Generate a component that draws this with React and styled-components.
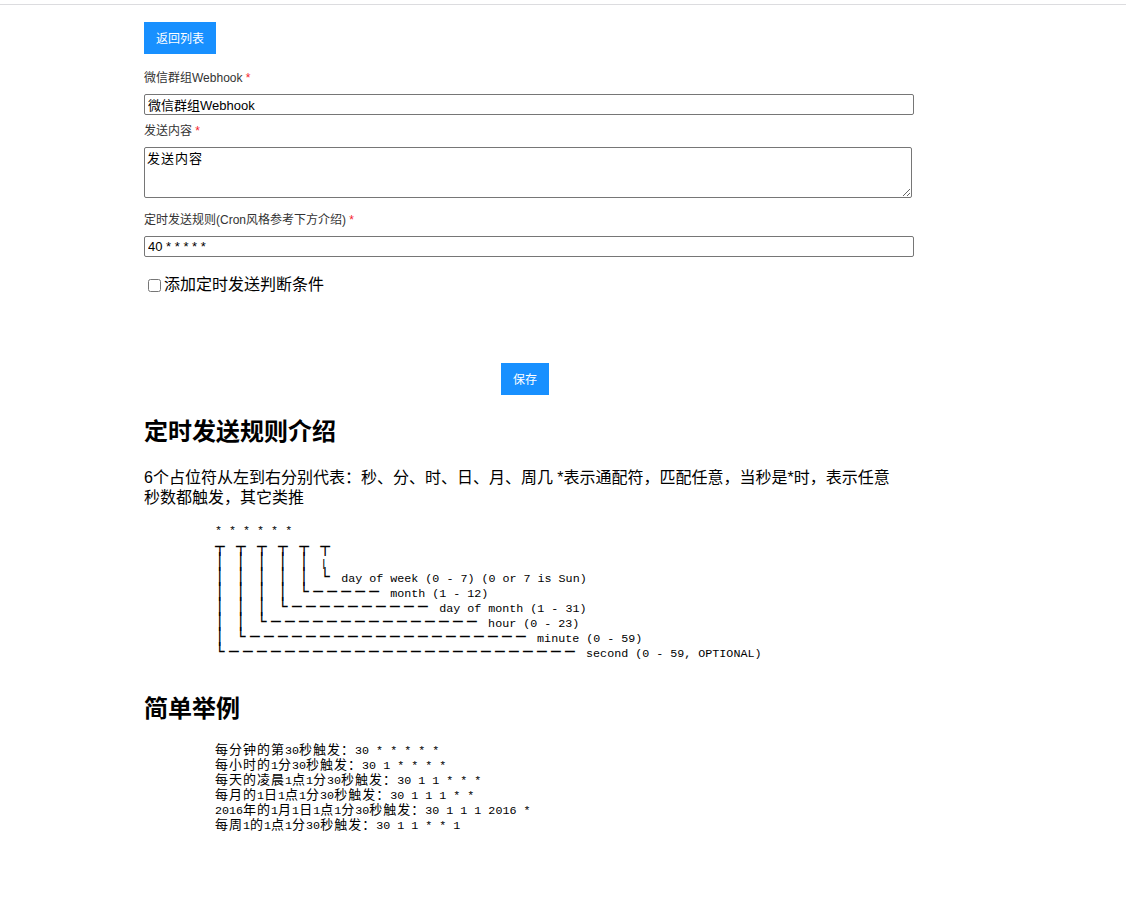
import React from "react";
import styled, { createGlobalStyle } from "styled-components";

const GlobalStyle = createGlobalStyle`
  body {
    margin: 0;
    background: #fff;
    color: #000;
    font-family: "Liberation Sans", "Noto Sans CJK SC", sans-serif;
  }
`;

const CRON_DIAGRAM = [
  "* * * * * *",
  "┬ ┬ ┬ ┬ ┬ ┬",
  "│ │ │ │ │ |",
  "│ │ │ │ │ └ day of week (0 - 7) (0 or 7 is Sun)",
  "│ │ │ │ └───── month (1 - 12)",
  "│ │ │ └────────── day of month (1 - 31)",
  "│ │ └─────────────── hour (0 - 23)",
  "│ └──────────────────── minute (0 - 59)",
  "└───────────────────────── second (0 - 59, OPTIONAL)",
];

const EXAMPLES = [
  "每分钟的第30秒触发：30 * * * * *",
  "每小时的1分30秒触发：30 1 * * * *",
  "每天的凌晨1点1分30秒触发：30 1 1 * * *",
  "每月的1日1点1分30秒触发：30 1 1 1 * *",
  "2016年的1月1日1点1分30秒触发：30 1 1 1 2016 *",
  "每周1的1点1分30秒触发：30 1 1 * * 1",
];

// in the old page the code font draws box chars and CJK at double width
const isBox = s => /[\u2500-\u257f]/.test(s);
const splitRuns = line =>
  line.split(/([\u2500-\u257f]+|[^\x00-\x7f\u2500-\u257f]+)/).filter(Boolean);

const CodeBlock = ({ lines, top }) => (
  <Pre top={top}>
    {lines.map((line, i) => (
      <Line key={i}>
        {splitRuns(line).map((run, j) => {
          if (isBox(run)) return <Box key={j}>{run}</Box>;
          if (/[^\x00-\x7f]/.test(run)) return <Cjk key={j}>{run}</Cjk>;
          return run;
        })}
      </Line>
    ))}
  </Pre>
);

export default function App() {
  return (
    <>
      <GlobalStyle />
      <TopBar />
      <Page>
        <BlueButton>返回列表</BlueButton>

        <Label top="16px">
          微信群组Webhook <Required>*</Required>
        </Label>
        <TextInput defaultValue="微信群组Webhook" />

        <Label top="8px">
          发送内容 <Required>*</Required>
        </Label>
        <TextArea defaultValue="发送内容" />

        <Label top="14px">
          定时发送规则(Cron风格参考下方介绍) <Required>*</Required>
        </Label>
        <TextInput defaultValue="40 * * * * *" />

        <CheckRow>
          <input type="checkbox" />
          添加定时发送判断条件
        </CheckRow>

        <Footer>
          <BlueButton>保存</BlueButton>
        </Footer>

        <Heading top="19px">定时发送规则介绍</Heading>
        <Intro>
          6个占位符从左到右分别代表：秒、分、时、日、月、周几 *表示通配符，匹配任意，当秒是*时，表示任意秒数都触发，其它类推
        </Intro>
        <CodeBlock lines={CRON_DIAGRAM} top="16px" />

        <Heading top="32px">简单举例</Heading>
        <CodeBlock lines={EXAMPLES} top="18px" />
      </Page>
    </>
  );
}

const TopBar = styled.div`
  height: 4px;
  border-bottom: 1px solid #dcdcdf;
`;

const Page = styled.div`
  width: 770px;
  padding: 17px 0 60px 144px;
  display: flex;
  flex-direction: column;
  align-items: flex-start;
`;

const BlueButton = styled.button`
  height: 32px;
  padding: 0 12px;
  border: none;
  border-radius: 0;
  background: #1890ff;
  color: #fff;
  font-family: "Noto Sans CJK SC", sans-serif;
  font-size: 12px;
  line-height: 32px;
  cursor: pointer;
`;

const Label = styled.label`
  display: block;
  margin-top: ${props => props.top};
  margin-bottom: 8px;
  font-size: 12px;
  line-height: 16px;
  color: #333;
`;

const Required = styled.span`
  color: #f5222d;
`;

const TextInput = styled.input`
  box-sizing: border-box;
  width: 770px;
  height: 21px;
  margin: 0;
  padding: 1px 3px;
  border: 1px solid #767676;
  border-radius: 2px;
  font-family: "Liberation Sans", "Noto Sans CJK SC", sans-serif;
  font-size: 13px;
  color: #000;
`;

const TextArea = styled.textarea`
  box-sizing: border-box;
  width: 768px;
  height: 51px;
  margin: 0;
  padding: 2px 2px;
  border: 1px solid #767676;
  border-radius: 2px;
  font-family: "Noto Sans Mono CJK SC", "Noto Sans CJK SC", monospace;
  font-size: 13px;
  letter-spacing: 1px;
  line-height: 16px;
  resize: both;
`;

const CheckRow = styled.label`
  display: flex;
  align-items: center;
  margin-top: 18px;
  font-size: 16px;
  line-height: 20px;
  color: #000;

  input {
    width: 13px;
    height: 13px;
    margin: 0 3px 0 4px;
  }
`;

const Footer = styled.div`
  width: 762px;
  display: flex;
  justify-content: center;
  margin-top: 68px;
`;

const Heading = styled.h2`
  margin: ${props => props.top} 0 0;
  font-family: "Noto Sans CJK SC", sans-serif;
  font-size: 24px;
  font-weight: 700;
  line-height: 32px;
`;

const Intro = styled.p`
  width: 760px;
  margin: 22px 0 0;
  font-size: 16px;
  line-height: 20px;
`;

const Pre = styled.pre`
  margin: ${props => props.top} 0 0 71px;
  font-family: "Liberation Mono", monospace;
  font-size: 11.7px;
  line-height: 15px;
  color: #000;
`;

const Line = styled.div`
  white-space: pre;
  height: 15px;
  line-height: 15px;
`;

const Cjk = styled.span`
  font-family: "Noto Sans CJK SC", sans-serif;
  font-size: 13px;
  letter-spacing: 1px;
  line-height: 15px;
`;

const Box = styled.span`
  font-family: "DejaVu Sans Mono", monospace;
  font-size: 16px;
  letter-spacing: 4.37px;
  line-height: 15px;
`;
